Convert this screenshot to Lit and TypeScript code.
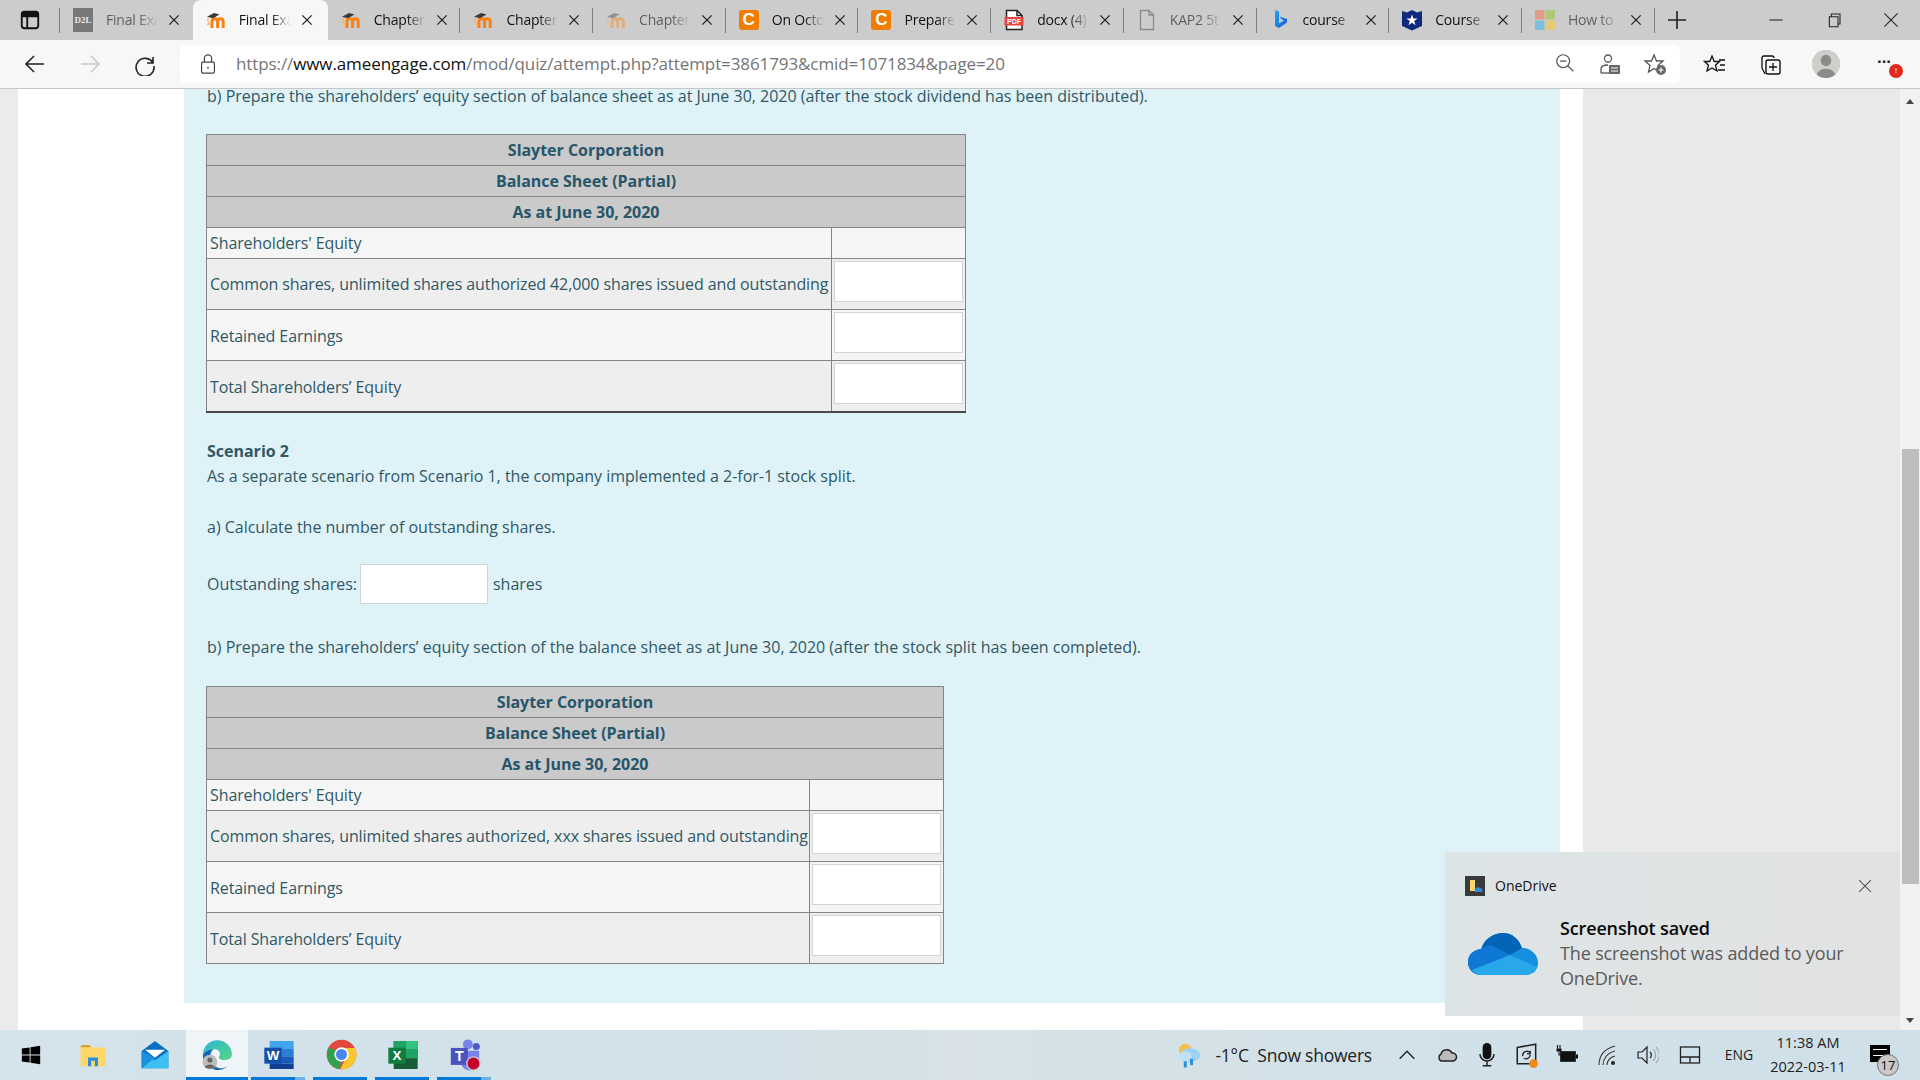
import { LitElement, html, css, svg, nothing } from "lit";
import { customElement } from "lit/decorators.js";

const moodle = svg`<svg viewBox="0 0 20 20" width="20" height="20"><path d="M6 18V11.5C6 9.5 7.2 8.7 8.8 8.7C10.4 8.7 11.6 9.7 11.6 11.5V18M11.6 11.5C11.6 9.5 12.9 8.7 14.4 8.7C16 8.7 17.2 9.7 17.2 11.5V18" fill="none" stroke="#f98012" stroke-width="3"/><path d="M1 6.8L8 3L13.5 4.6L7 8.2Z" fill="#3a3a3a"/><path d="M2 7.5V12" stroke="#f5b06a" stroke-width="1.2"/><path d="M2.5 10.5L1 15H4Z" fill="#f9b36f"/></svg>`;
const d2l = html`<span class="d2l">D2L</span>`;
const cIcon = html`<span class="c-icon">C</span>`;
const pdf = svg`<svg viewBox="0 0 20 22" width="20" height="22"><path d="M2.5 20.5V1.5H13L18 6.5V20.5Z" fill="#fff" stroke="#222" stroke-width="1.5"/><path d="M13 1.5V6.5H18" fill="none" stroke="#222" stroke-width="1.5"/><rect x="0.5" y="8" width="19" height="8.5" fill="#e8403f"/><text x="10" y="15" font-size="7" font-weight="700" fill="#fff" text-anchor="middle" font-family="Liberation Sans, sans-serif">PDF</text></svg>`;
const fileI = svg`<svg viewBox="0 0 20 22" width="20" height="22"><path d="M3.5 20.5V1.5H12L16.5 6V20.5Z" fill="none" stroke="#8a8a8a" stroke-width="1.3"/><path d="M12 1.5V6H16.5" fill="none" stroke="#8a8a8a" stroke-width="1.3"/></svg>`;
const bing = svg`<svg viewBox="0 0 20 22" width="20" height="22"><defs><linearGradient id="bg" x1="0" y1="0" x2="1" y2="1"><stop offset="0" stop-color="#1fa8f0"/><stop offset="1" stop-color="#1b58d8"/></linearGradient></defs><path d="M5 1L9 2.5V14.5L14 11.5L11 10L10 7.5L17 10V13.5L9 19L5 17Z" fill="url(#bg)"/></svg>`;
const shield = svg`<svg viewBox="0 0 20 22" width="20" height="22"><path d="M0 2L5 3.5L10 1L15 3.5L20 2V17L10 21.5L0 17Z" fill="#0f2a7c"/><path d="M10 5.5L11.4 9.6H15.6L12.2 12.1L13.5 16.2L10 13.7L6.5 16.2L7.8 12.1L4.4 9.6H8.6Z" fill="#fff"/></svg>`;
const msSq = svg`<svg viewBox="0 0 20 20" width="20" height="20"><rect x="0" y="0" width="9.5" height="9.5" fill="#e19c86"/><rect x="10.5" y="0" width="9.5" height="9.5" fill="#afc878"/><rect x="0" y="10.5" width="9.5" height="9.5" fill="#7ebfe0"/><rect x="10.5" y="10.5" width="9.5" height="9.5" fill="#e5cb78"/></svg>`;

interface Tab { icon: unknown; title: string; dim?: boolean; active?: boolean; fadeIcon?: boolean; sep?: boolean }
const tabs: Tab[] = [
  { icon: d2l, title: "Final Exa", dim: true },
  { icon: moodle, title: "Final Exa", active: true },
  { icon: moodle, title: "Chapter", sep: true },
  { icon: moodle, title: "Chapter", sep: true },
  { icon: moodle, title: "Chapter", dim: true, fadeIcon: true, sep: true },
  { icon: cIcon, title: "On Octo", sep: true },
  { icon: cIcon, title: "Prepare", sep: true },
  { icon: pdf, title: "docx (4)", sep: true },
  { icon: fileI, title: "KAP2 5t", dim: true, sep: true },
  { icon: bing, title: "course", sep: true },
  { icon: shield, title: "Course", sep: true },
  { icon: msSq, title: "How to", dim: true, sep: true },
];

const line = (d: string, w = 1.4, c = "#222") => svg`<path d=${d} fill="none" stroke=${c} stroke-width=${w}/>`;
const ic = (size: number, body: unknown) => html`<svg viewBox="0 0 24 24" width=${size} height=${size}>${body}</svg>`;

const closeX = ic(14, line("M4 4L20 20M20 4L4 20", 2.2, "#222"));

const trayWeather = ic(30, svg`<circle cx="9" cy="8" r="5" fill="#f3c24a"/><ellipse cx="13" cy="12" rx="8" ry="5.5" fill="#9bd1f5"/><ellipse cx="9" cy="13" rx="5" ry="4" fill="#bfe2f8"/><path d="M9 17V22M14 15V20" stroke="#2d8fe0" stroke-width="2.4"/>`);

const leftApps = [
  { key: "win", icon: ic(22, svg`<path d="M2 5L10.5 3.8V11.5H2ZM11.5 3.6L22 2V11.5H11.5ZM2 12.5H10.5V20.2L2 19ZM11.5 12.5H22V22L11.5 20.4Z" fill="#000"/>`), bar: 0 },
  { key: "files", icon: ic(30, svg`<path d="M2 5.5A1.5 1.5 0 0 1 3.5 4H9L11 6H2Z" fill="#e0a020"/><path d="M2 6H22V21H2Z" fill="#fcd76a"/><path d="M8 21V14H16V21H13.5V16.5H10.5V21Z" fill="#2d8fd8"/>`), bar: 0 },
  { key: "mail", icon: ic(32, svg`<path d="M2 9L12 1.5L22 9V22H2Z" fill="#0a6fc2"/><path d="M4.5 8H19.5L12 14Z" fill="#fff"/><path d="M2 9L12 16L22 9V22H2Z" fill="#3cc0f2"/><path d="M2 22L12 14L2 9Z" fill="#1a8ee0"/>`), bar: 0 },
  { key: "edge", icon: ic(34, svg`<defs><linearGradient id="eg" x1="0" y1="0" x2="1" y2="1"><stop offset="0" stop-color="#2fb4d8"/><stop offset="1" stop-color="#55d67e"/></linearGradient></defs><path d="M2 12C2 6 6.500 1.500 12 1.500C18 1.500 22.500 6 22.500 11.500C22.500 14.500 20 15.500 17 15.500C14.500 15.500 13 14.500 13.500 13C15 11 13.500 8 10.500 8C6.500 8 3.500 9.500 2 12Z" fill="url(#eg)"/><path d="M2 12C3.500 9.500 6.500 8 9.500 8C6.500 10 6.500 16 10.500 19.500C13 22 16.500 22 19.500 19.800C16.500 22.500 13.500 22.800 11.500 22.500C6 22 2 17.500 2 12Z" fill="#0c67b4"/><circle cx="7" cy="17" r="5.200" fill="#bdbdbd"/><circle cx="7" cy="15.500" r="1.800" fill="#666"/><path d="M3.500 20.500C4 18 10 18 10.500 20.500C9 22 5 22 3.500 20.500Z" fill="#666"/>`), bar: 1 },
  { key: "word", icon: ic(32, svg`<rect x="5" y="1.500" width="18" height="6" fill="#41a5ee"/><rect x="5" y="7.500" width="18" height="5.500" fill="#2b7cd3"/><rect x="5" y="13" width="18" height="5.500" fill="#185abd"/><rect x="5" y="18.500" width="18" height="4" fill="#103f91"/><rect x="1" y="6.500" width="13" height="12" fill="#134fa8"/><text x="7.500" y="16" font-size="10" font-weight="700" fill="#fff" text-anchor="middle" font-family="Liberation Sans, sans-serif">W</text>`), bar: 2 },
  { key: "chrome", icon: ic(33, svg`<circle cx="12" cy="12" r="10.800" fill="#e2483d"/><path d="M12 12L3 6.500A10.800 10.800 0 0 0 11 22.800Z" fill="#2fa14f"/><path d="M12 7.200H21.800A10.800 10.800 0 0 1 11 22.800L16 13Z" fill="#fbc62f"/><circle cx="12" cy="12" r="5.200" fill="#fff"/><circle cx="12" cy="12" r="4" fill="#4688f0"/>`), bar: 1 },
  { key: "excel", icon: ic(32, svg`<rect x="5" y="1.500" width="18" height="21" fill="#185c37"/><rect x="5" y="1.500" width="9" height="6" fill="#21a366"/><rect x="14" y="1.500" width="9" height="6" fill="#33c481"/><rect x="14" y="7.500" width="9" height="7" fill="#21a366"/><rect x="5" y="7.500" width="9" height="7" fill="#107c41"/><rect x="1" y="6.500" width="13" height="12" fill="#107c41"/><text x="7.500" y="16" font-size="10" font-weight="700" fill="#fff" text-anchor="middle" font-family="Liberation Sans, sans-serif">X</text>`), bar: 1 },
  { key: "teams", icon: ic(34, svg`<circle cx="14" cy="4.500" r="3.500" fill="#7b83eb"/><circle cx="20" cy="6" r="2.500" fill="#5059c9"/><path d="M9 9H22V16C22 20 19 23 15 23C12 23 9 20 9 17Z" fill="#7b83eb"/><rect x="2" y="7" width="12" height="12" fill="#4b53bc"/><text x="8" y="16.500" font-size="10" font-weight="700" fill="#fff" text-anchor="middle" font-family="Liberation Sans, sans-serif">T</text><circle cx="18" cy="18" r="5.200" fill="#c8c8c8"/><circle cx="18" cy="18" r="4.200" fill="#c4002d"/>`), bar: 2 },
];

const trayIcons = [
  { w: 40, icon: ic(22, line("M4 16L12 8L20 16", 1.5)) },
  { w: 40, icon: ic(24, svg`<path d="M6 18A4 4 0 0 1 6 11A6 6 0 0 1 17 10A4 4 0 0 1 18 18Z" fill="#bbb" stroke="#222" stroke-width="1.500"/>`) },
  { w: 40, icon: ic(26, svg`<rect x="8" y="1" width="8" height="15" rx="4" fill="#111"/><path d="M5.500 11A6.500 6.500 0 0 0 18.500 11M12 18V22M8 22H16" fill="none" stroke="#222" stroke-width="1.400"/>`) },
  { w: 40, icon: ic(26, svg`<path d="M3 5L20 2V20H3Z" fill="none" stroke="#222" stroke-width="1.400"/><path d="M8 13A4 4 0 0 1 15 10M15 12A4 4 0 0 1 9 15M15 8V11H12" fill="none" stroke="#222" stroke-width="1.200"/><circle cx="18" cy="20" r="4" fill="#f08a16"/>`) },
  { w: 40, icon: ic(24, svg`<rect x="5.500" y="8.500" width="15" height="10" fill="#111" stroke="#222" stroke-width="0.800"/><rect x="21" y="11.500" width="2" height="4" fill="#111"/><path d="M2.500 2V5.500M5 2V5.500" stroke="#111" stroke-width="1.100"/><rect x="1.500" y="5.500" width="5" height="3" fill="#111"/><path d="M4 8.500V12H6" fill="none" stroke="#111" stroke-width="1.100"/>`) },
  { w: 40, icon: ic(24, svg`<path d="M4 22C4 13 9 6 20 3M8 22C8 16 12 10 20 8M12 22C12 18 15 14 20 13" fill="none" stroke="#333" stroke-width="1.100"/><circle cx="18" cy="20" r="2" fill="#222"/>`) },
  { w: 40, icon: ic(24, svg`<path d="M3 9H7L12 4V20L7 15H3Z" fill="none" stroke="#222" stroke-width="1.200"/><path d="M15 9A4 4 0 0 1 15 15" fill="none" stroke="#222" stroke-width="1.200"/><path d="M18 6A8 8 0 0 1 18 18M21 4A11 11 0 0 1 21 20" fill="none" stroke="#999" stroke-width="1"/>`) },
  { w: 46, icon: ic(24, svg`<rect x="2.500" y="4" width="19" height="16" fill="none" stroke="#222" stroke-width="1.300"/><path d="M2.500 14H21.500M12 14V20" stroke="#222" stroke-width="1.300"/>`) },
];

@customElement("app-root")
export class AppRoot extends LitElement {
  static styles = css`
    :host { display: block; width: 1920px; height: 1080px; overflow: hidden; font-family: "Open Sans", sans-serif; background: #fff; }
    .screen { display: flex; flex-direction: column; height: 1080px; position: relative; }
    svg { display: block; flex: none; }

    .strip { display: flex; align-items: stretch; height: 40px; background: #cccccc; flex: none; }
    .sidebar { width: 60px; display: flex; align-items: center; justify-content: center; padding-right: 1px; box-sizing: border-box; position: relative; }
    .sidebar::after, .tab.sep::after { content: ""; position: absolute; right: 0; top: 8px; height: 25px; width: 1px; background: #808080; }
    .tab { width: 132.7px; flex: none; box-sizing: border-box; display: flex; align-items: center; padding: 0 13px; position: relative; font: 14px/20px "Open Sans", sans-serif; color: #111; }
    .tab.active { width: 135px; background: #f7f7f7; border-radius: 8px 8px 0 0; }
    .tab.dim .title { color: #5f5f5f; }
    .tab.faded .ticon { opacity: 0.4; }
    .ticon { width: 20px; height: 24px; display: flex; align-items: center; justify-content: center; flex: none; }
    .title { margin-left: 13px; width: 52px; white-space: nowrap; overflow: hidden; letter-spacing: -0.2px; -webkit-mask-image: linear-gradient(90deg, #000 62%, transparent 100%); mask-image: linear-gradient(90deg, #000 62%, transparent 100%); flex: none; }
    .tclose { margin-left: 9px; flex: none; width: 14px; height: 14px; }
    .d2l { display: flex; align-items: center; justify-content: center; width: 20px; height: 24px; background: #77787a; color: #e8e8e8; font: 700 9px "Liberation Serif", serif; }
    .c-icon { display: flex; align-items: center; justify-content: center; width: 20px; height: 20px; border-radius: 3px; background: #f07c00; color: #fff; font: 700 17px "Liberation Sans", sans-serif; }
    .plus { width: 44px; display: flex; align-items: center; justify-content: center; }
    .winctl { margin-left: auto; display: flex; }
    .winbtn { width: 57.500px; display: flex; align-items: center; justify-content: center; }

    .toolbar { height: 48px; flex: none; background: #f7f7f7; border-bottom: 1px solid #c6c6c6; display: flex; align-items: center; }
    .navs { display: flex; width: 180px; flex: none; padding-left: 7px; box-sizing: border-box; }
    .nav { width: 55px; display: flex; align-items: center; justify-content: center; }
    .address { width: 1500px; height: 38px; flex: none; background: #fff; border-radius: 5px; display: flex; align-items: center; }
    .lock { width: 56px; flex: none; display: flex; justify-content: center; box-sizing: border-box; }
    .url { font: 17px/20px "Open Sans", sans-serif; color: #757575; letter-spacing: -0.1px; white-space: nowrap; flex: 1; }
    .url b { font-weight: 400; color: #111; }
    .addr-icons { display: flex; padding-right: 3px; }
    .aicon { width: 45px; display: flex; justify-content: center; }
    .tools { display: flex; flex: 1; padding-left: 7px; align-self: stretch; }
    .tool { width: 56px; display: flex; justify-content: center; align-items: center; position: relative; }
    .tool.narrow { width: 53px; }
    .tool.wide { width: 60px; }
    .avatar { width: 28px; height: 28px; border-radius: 50%; overflow: hidden; background: #cfcdca; }
    .dots { font: 700 17px/14px "Liberation Sans", sans-serif; color: #222; position: relative; top: -6px; }
    .badge { position: absolute; left: 33px; top: 24px; width: 14px; height: 14px; border-radius: 50%; background: #e02a20; color: #fff; font: 700 10px/14px "Liberation Sans", sans-serif; text-align: center; }

    .viewport { flex: 1; min-height: 0; display: flex; overflow: hidden; position: relative; }
    .gutter { width: 18px; background: #ebebeb; flex: none; }
    .leftwhite { width: 166px; flex: none; background: #fff; }
    .panel-wrap { width: 1399px; flex: none; background: #fff; overflow: hidden; }
    .panel { width: 1376px; margin-top: -20px; padding: 15px 0 39px 22px; box-sizing: border-box; background: #dff2f8; color: #2f5866; font-size: 16px; line-height: 25px; letter-spacing: -0.01px; }
    .panel p { margin: 0; white-space: nowrap; padding-left: 1px; }
    .panel strong { font-weight: 700; }
    .rightcol { width: 317px; flex: none; background: #e9e9e9; }
    .scrollbar { width: 20px; flex: none; background: #f1f1f1; display: flex; flex-direction: column; align-items: center; position: relative; }
    .thumb { width: 17px; height: 435px; background: #bdbdbd; margin-top: 360px; }
    .arrow { position: absolute; width: 0; height: 0; border-left: 4px solid transparent; border-right: 4px solid transparent; left: 6px; }
    .arrow.up { top: 10px; border-bottom: 5px solid #444; }
    .arrow.down { bottom: 7px; border-top: 5px solid #444; }

    table { border-collapse: collapse; table-layout: fixed; border: 1px solid #7a7a7a; }
    table.one { width: 760px; border-bottom: 2px solid #4a4a4a; margin-top: 25px; }
    table.two { width: 738px; margin-top: 26px; }
    td { border: 1px solid #858585; padding: 0 0 0 3px; font-size: 16px; line-height: 25px; white-space: nowrap; vertical-align: middle; letter-spacing: -0.1px; }
    tr.head td { background: #cacaca; text-align: center; font-weight: 700; height: 30px; padding: 0; color: #27566a; letter-spacing: -0.03px; }
    tr.r0 td { background: #f5f5f5; }
    tr.r1 td { background: #eeeeee; }
    tr.first td { height: 30px; }
    tr.tall td { height: 50px; }
    tr.tall td.low { height: 48px; padding-top: 2px; }
    tr.tall td.val { height: 48px; padding: 2px 2px 0 2px; vertical-align: top; }
    .field { display: block; box-sizing: border-box; height: 41px; width: 100%; background: #fff; border: 1px solid #ced4da; }
    .panel p.scn { margin-top: 26px; }
    .panel p.a { margin-top: 26px; }
    .outrow { display: flex; align-items: center; margin-top: 24px; height: 40px; padding-left: 1px; }
    .outrow .field { width: 128px; height: 40px; margin: 0 5px 0 3px; }
    .panel p.b2 { margin-top: 31px; }

    .toast { position: absolute; left: 1445px; top: 763px; width: 455px; height: 164px; box-sizing: border-box; background: linear-gradient(100deg, #dde4e6, #e2e2e2); padding: 24px 20px 0 20px; color: #111; }
    .toast-head { display: flex; align-items: center; font: 14px/20px "Open Sans", sans-serif; }
    .od-badge { width: 20px; height: 20px; background: #3a3a3a; margin-right: 10px; }
    .toast-x { margin-left: auto; margin-right: 8px; }
    .toast-body { display: flex; margin-top: 20px; }
    .cloud { width: 70px; margin: 0 22px 0 3px; padding-top: 15px; flex: none; }
    .tt { font: 600 18px/25px "Open Sans", sans-serif; letter-spacing: -0.15px; color: #0a0a0a; }
    .td { font: 18px/25px "Open Sans", sans-serif; letter-spacing: -0.15px; color: #5a5a5a; }

    .taskbar { height: 50px; flex: none; display: flex; align-items: stretch; background: linear-gradient(90deg, #d5e3ea 0%, #d0e1e9 35%, #d8e2e6 50%, #d1e1e9 75%, #cfe0e8 100%); position: relative; }
    .apps { display: flex; }
    .app { width: 62px; display: flex; align-items: center; justify-content: center; position: relative; padding-bottom: 1px; box-sizing: border-box; }
    .app.active { background: #eef4f8; }
    .bar { position: absolute; bottom: 0; left: 3px; right: 5px; height: 3px; background: #0078d7; }
    .app.active .bar { left: 0; right: 0; }
    .bar.part::after { content: ""; position: absolute; right: 0; top: 0; bottom: 0; width: 10px; background: #6cb2ea; }
    .tray { margin-left: auto; display: flex; align-items: center; padding-right: 20px; }
    .weather { display: flex; align-items: center; font: 17.500px/24px "Open Sans", sans-serif; letter-spacing: -0.23px; color: #222; margin-right: 15px; }
    .weather span { margin-left: 11px; white-space: pre; }
    .tslot { display: flex; justify-content: center; }
    .eng { font: 14px/20px "Open Sans", sans-serif; color: #222; width: 48px; text-align: center; margin: 0 3px 0 2px; }
    .clock { font: 14.500px/24px "Open Sans", sans-serif; color: #222; text-align: center; width: 84px; }
    .notif { width: 50px; height: 50px; position: relative; display: flex; align-items: center; justify-content: center; }
    .note { width: 20px; height: 17px; background: #000; position: relative; top: -1.500px; left: 4.500px; }
    .note::before { content: ""; position: absolute; left: 3px; right: 3px; top: 4px; height: 5px; border-top: 1px solid #fff; border-bottom: 1px solid #fff; }
    .count { position: absolute; left: 27px; top: 24px; width: 22px; height: 22px; border-radius: 50%; background: #c8c8c8; border: 1px solid #777; box-sizing: border-box; font: 13px/20px "Open Sans", sans-serif; text-align: center; color: #111; }
  `;

  private renderTable(cls: string, common: string) {
    return html`<table class=${cls}>
      <colgroup><col style="width:${cls === "one" ? 625 : 603}px" /><col /></colgroup>
      <tr class="head"><td colspan="2">Slayter Corporation</td></tr>
      <tr class="head"><td colspan="2">Balance Sheet (Partial)</td></tr>
      <tr class="head"><td colspan="2">As at June 30, 2020</td></tr>
      <tr class="r0 first"><td>Shareholders' Equity</td><td></td></tr>
      <tr class="r1 tall"><td>${common}</td><td class="val"><span class="field"></span></td></tr>
      <tr class="r0 tall"><td class="low">Retained Earnings</td><td class="val"><span class="field"></span></td></tr>
      <tr class="r1 tall"><td class="low">Total Shareholders’ Equity</td><td class="val"><span class="field"></span></td></tr>
    </table>`;
  }

  render() {
    return html`<div class="screen">
      <div class="strip">
        <div class="sidebar">${ic(22, svg`<rect x="3" y="3" width="18" height="18" rx="3" fill="none" stroke="#111" stroke-width="2"/><path d="M3 8H21M9 8V21" stroke="#111" stroke-width="2"/><rect x="3" y="3" width="18" height="5" fill="#111"/>`)}</div>
        ${tabs.map(
          (t) => html`<div class="tab ${t.active ? "active" : ""} ${t.dim ? "dim" : ""} ${t.sep ? "sep" : ""} ${t.fadeIcon ? "faded" : ""}">
            <span class="ticon">${t.icon}</span><span class="title">${t.title}</span><span class="tclose">${closeX}</span>
          </div>`
        )}
        <div class="plus">${ic(24, line("M12 3V21M3 12H21", 1.6, "#222"))}</div>
        <div class="winctl">
          <div class="winbtn">${ic(16, line("M2 12H22", 1.6, "#222"))}</div>
          <div class="winbtn">${ic(16, line("M5 7H18V22H5ZM8 7V3H21V18H18", 1.6, "#222"))}</div>
          <div class="winbtn">${ic(16, line("M2 2L22 22M22 2L2 22", 1.6, "#222"))}</div>
        </div>
      </div>

      <div class="toolbar">
        <div class="navs">
          <div class="nav">${ic(24, line("M21 12H3M11 4L3 12L11 20", 1.6, "#222"))}</div>
          <div class="nav">${ic(24, line("M3 12H21M13 4L21 12L13 20", 1.6, "#c9c9c9"))}</div>
          <div class="nav">${ic(24, line("M20 5V11H14M20 11A9 9 0 1 0 21 14", 1.6, "#222"))}</div>
        </div>
        <div class="address">
          <div class="lock">${ic(22, svg`<rect x="5" y="10" width="14" height="12" rx="1.500" fill="none" stroke="#444" stroke-width="1.300"/><path d="M8 10V6A4 4 0 0 1 16 6V10" fill="none" stroke="#444" stroke-width="1.300"/><circle cx="12" cy="16" r="1" fill="#444"/>`)}</div>
          <div class="url">https://<b>www.ameengage.com</b>/mod/quiz/attempt.php?attempt=3861793&cmid=1071834&page=20</div>
          <div class="addr-icons">
            <div class="aicon">${ic(22, svg`<circle cx="10" cy="10" r="7" fill="none" stroke="#555" stroke-width="1.300"/><path d="M6.500 10H13.500M15 15L21 21" stroke="#555" stroke-width="1.300"/>`)}</div>
            <div class="aicon">${ic(24, svg`<circle cx="10" cy="6.500" r="3.500" fill="none" stroke="#555" stroke-width="1.300"/><path d="M3 21V17C3 14 6 13 10 13" fill="none" stroke="#555" stroke-width="1.300"/><path d="M3 21H12" stroke="#555" stroke-width="1.300"/><rect x="11" y="13" width="11" height="9" rx="1" fill="#666"/><path d="M13 16H20M13 19H20" stroke="#fff" stroke-width="1"/>`)}</div>
            <div class="aicon">${ic(24, svg`<path d="M11 3L13.500 9H20L15 13.500L16.500 20L11 16.500L5.500 20L7 13.500L2 9H8.500Z" fill="none" stroke="#555" stroke-width="1.300"/><circle cx="18" cy="18" r="5" fill="#666"/><path d="M15.500 18H20.500M18 15.500V20.500" stroke="#fff" stroke-width="1.200"/>`)}</div>
          </div>
        </div>
        <div class="tools">
          <div class="tool">${ic(24, svg`<path d="M9 4L11.200 9.500H16.500L12.500 13.200L14 19L9 16L4 19L5.500 13.200L1.500 9.500H6.800Z" fill="none" stroke="#111" stroke-width="1.300"/><path d="M16 8H22M17 13H22M15 18H22" stroke="#111" stroke-width="1.300"/>`)}</div>
          <div class="tool narrow">${ic(24, svg`<path d="M4 16V6A2 2 0 0 1 6 4H14A2 2 0 0 1 16 6" fill="none" stroke="#111" stroke-width="1.300"/><path d="M4 16L7 22" fill="none" stroke="#111" stroke-width="1.300"/><rect x="8" y="8" width="14" height="14" rx="2" fill="none" stroke="#111" stroke-width="1.400"/><path d="M15 11V19M11 15H19" stroke="#111" stroke-width="1.300"/>`)}</div>
          <div class="tool wide"><span class="avatar">${ic(28, svg`<rect width="24" height="24" fill="#d0cecb"/><ellipse cx="12" cy="9" rx="4.500" ry="5" fill="#8c8a88"/><ellipse cx="12" cy="22" rx="8" ry="6" fill="#8c8a88"/>`)}</span></div>
          <div class="tool"><span class="dots">...</span><span class="badge">↑</span></div>
        </div>
      </div>

      <div class="viewport">
        <div class="gutter"></div>
        <div class="leftwhite"></div>
        <div class="panel-wrap">
          <div class="panel">
            <p>b) Prepare the shareholders’ equity section of balance sheet as at June 30, 2020 (after the stock dividend has been distributed).</p>
            ${this.renderTable("one", "Common shares, unlimited shares authorized 42,000 shares issued and outstanding")}
            <p class="scn"><strong>Scenario 2</strong></p>
            <p>As a separate scenario from Scenario 1, the company implemented a 2-for-1 stock split.</p>
            <p class="a">a) Calculate the number of outstanding shares.</p>
            <div class="outrow">Outstanding shares:<span class="field"></span>shares</div>
            <p class="b2">b) Prepare the shareholders’ equity section of the balance sheet as at June 30, 2020 (after the stock split has been completed).</p>
            ${this.renderTable("two", "Common shares, unlimited shares authorized, xxx shares issued and outstanding")}
          </div>
        </div>
        <div class="rightcol"></div>
        <div class="scrollbar"><span class="arrow up"></span><div class="thumb"></div><span class="arrow down"></span></div>

        <div class="toast">
          <div class="toast-head">
            <span class="od-badge"><svg viewBox="0 0 20 20" width="20" height="20"><path d="M5 4H10V15H5Z" fill="#f5d76e"/><path d="M10 14A3 3 0 0 1 15 12A2.500 2.500 0 0 1 17 16H10Z" fill="#2a8ee0"/></svg></span>
            OneDrive
            <span class="toast-x">${ic(14, line("M2 2L22 22M22 2L2 22", 1.8, "#555"))}</span>
          </div>
          <div class="toast-body">
            <div class="cloud"><svg viewBox="0 0 70 46" width="70" height="46"><path d="M14 44C5 44 0 38 0 31C0 24 5 19 13 18C17 7 26 2 35 2C44 2 51 8 54 17C62 17 70 23 70 32C70 39 65 44 57 44Z" fill="#1490df"/><path d="M13 18C17 7 26 2 35 2C44 2 51 8 54 17L42 24L24 15C20 15 16 16 13 18Z" fill="#0364b8"/><path d="M14 44C5 44 0 38 0 31C0 24 5 19 13 18C17 16 21 15 24 15L42 24L6 40C8 42 11 44 14 44Z" fill="#0f78d4"/><path d="M14 44C10 44 7 42 4 39L42 24L69 36C67 41 63 44 57 44Z" fill="#28a8ea"/></svg></div>
            <div>
              <div class="tt">Screenshot saved</div>
              <div class="td">The screenshot was added to your<br />OneDrive.</div>
            </div>
          </div>
        </div>
      </div>

      <div class="taskbar">
        <div class="apps">
          ${leftApps.map(
            (a) => html`<div class="app ${a.key === "edge" ? "active" : ""}">${a.icon}${a.bar ? html`<span class="bar ${a.bar === 2 ? "part" : ""}"></span>` : nothing}</div>`
          )}
        </div>
        <div class="tray">
          <div class="weather">${trayWeather}<span>-1°C  Snow showers</span></div>
          ${trayIcons.map((t) => html`<div class="tslot" style="width:${t.w}px">${t.icon}</div>`)}
          <div class="eng">ENG</div>
          <div class="clock">11:38 AM<br />2022-03-11</div>
          <div class="notif"><span class="note"></span><span class="count">17</span></div>
        </div>
      </div>
    </div>`;
  }
}
